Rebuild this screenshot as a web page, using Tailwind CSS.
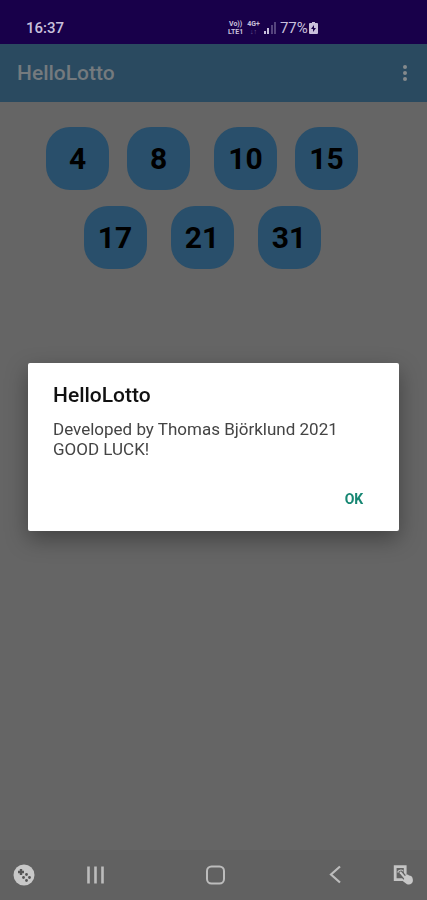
<!DOCTYPE html>
<html lang="en">
<head>
<meta charset="utf-8">
<meta name="viewport" content="width=device-width, initial-scale=1">
<title>HelloLotto</title>
<script src="https://cdn.jsdelivr.net/npm/@tailwindcss/browser@4"></script>
</head>
<body class="bg-[#656565] font-[Roboto,'Noto_Sans',sans-serif]">
<div class="flex min-h-screen flex-col">
  <div class="flex h-11 items-center bg-[#18004a] pt-3 pl-[26px] text-[#c9c0dc]">
    <time class="w-[202px] text-[15px] leading-5 font-medium">16:37</time>
    <div class="flex items-center gap-1">
      <div class="flex flex-col text-center text-[7px] leading-[8px] font-bold"><span>Vo))</span><span>LTE1</span></div>
      <div class="flex flex-col items-center text-[7px] leading-[8px] font-bold"><span>4G+</span><span class="text-[#6c5c94]">↓↑</span></div>
      <svg class="h-3 w-3" viewBox="0 0 12 12" fill="currentColor" aria-hidden="true"><path d="M0 9h2v3H0zM3 6h2v6H3z"/><path opacity=".35" d="M7 3h2v9H7zM10 0h2v12h-2z"/></svg>
      <div class="flex items-center gap-px"><span class="text-[15px] leading-5">77%</span>
      <svg class="h-3 w-[9px]" viewBox="0 0 9 12" fill="currentColor" aria-hidden="true"><path fill-rule="evenodd" d="M3 0h3v1h2q1 0 1 1v9q0 1-1 1H1q-1 0-1-1V2q0-1 1-1h2zM5 3 2 7h2v3l3-4H5z"/></svg></div>
    </div>
  </div>
  <header class="flex h-[58px] items-center justify-between bg-[#2a4a60] pr-3 pl-[17px]">
    <h1 class="text-[21px] leading-6 font-medium text-[#747a7e]">HelloLotto</h1>
    <button type="button" aria-label="More options" class="flex h-10 w-5 items-center justify-center text-[#858a8c]">
      <svg class="h-5 w-5" viewBox="0 0 20 20" fill="currentColor"><circle cx="10" cy="4" r="2"/><circle cx="10" cy="10" r="2"/><circle cx="10" cy="16" r="2"/></svg>
    </button>
  </header>
  <main class="flex flex-1 flex-col gap-4 pt-[25px] pr-[23px] text-3xl font-bold text-black">
    <div class="flex justify-center gap-6">
      <div class="flex gap-[18px]">
        <span class="flex h-[63px] w-[63px] items-center justify-center rounded-3xl bg-[#294f6b]">4</span>
        <span class="flex h-[63px] w-[63px] items-center justify-center rounded-3xl bg-[#294f6b]">8</span>
      </div>
      <div class="flex gap-[18px]">
        <span class="flex h-[63px] w-[63px] items-center justify-center rounded-3xl bg-[#294f6b]">10</span>
        <span class="flex h-[63px] w-[63px] items-center justify-center rounded-3xl bg-[#294f6b]">15</span>
      </div>
    </div>
    <div class="flex justify-center gap-6">
      <span class="flex h-[63px] w-[63px] items-center justify-center rounded-3xl bg-[#294f6b]">17</span>
      <span class="flex h-[63px] w-[63px] items-center justify-center rounded-3xl bg-[#294f6b]">21</span>
      <span class="flex h-[63px] w-[63px] items-center justify-center rounded-3xl bg-[#294f6b]">31</span>
    </div>
  </main>
  <nav class="flex h-[50px] items-center justify-between bg-[#616161] px-3 text-[#bcbcbc]">
    <button type="button" aria-label="Game tools" class="flex h-10 w-6 items-center justify-center">
      <svg class="h-6 w-6" viewBox="0 0 24 24"><circle cx="12" cy="12" r="10.5" fill="#c8c8c8"/><path d="M9 6v6M6 9h6" stroke="#555" stroke-width="2.4"/><g fill="#555"><circle cx="14.5" cy="11.5" r="1.4"/><circle cx="17.5" cy="14.5" r="1.4"/><circle cx="11.5" cy="14.5" r="1.4"/><circle cx="14.5" cy="17.5" r="1.4"/></g></svg>
    </button>
    <div class="flex flex-1 items-center justify-between pr-11 pl-12">
      <button type="button" aria-label="Recent apps" class="flex h-10 w-6 items-center justify-center">
        <svg class="h-6 w-6" viewBox="0 0 24 24" fill="none" stroke="currentColor" stroke-width="2.6"><path d="M4.500 3.500v17M11.500 3.500v17M18.500 3.500v17"/></svg>
      </button>
      <button type="button" aria-label="Home" class="flex h-10 w-6 items-center justify-center">
        <svg class="h-6 w-6" viewBox="0 0 24 24" fill="none" stroke="currentColor" stroke-width="2"><rect x="3" y="3.500" width="17" height="17" rx="4.500"/></svg>
      </button>
      <button type="button" aria-label="Back" class="flex h-10 w-6 items-center justify-center">
        <svg class="h-6 w-6" viewBox="0 0 24 24" fill="none" stroke="currentColor" stroke-width="2.2"><path d="M17 3.500 8 11.500l9 8"/></svg>
      </button>
    </div>
    <button type="button" aria-label="Touch control" class="flex h-10 w-6 items-center justify-center">
      <svg class="h-6 w-6" viewBox="0 0 24 24"><path d="M4.200 3.700h10v13h-10z" fill="#626262" stroke="#c4c4c4" stroke-width="2.800"/><path d="M6.800 9.500a3 3 0 0 1 5.200-1" fill="none" stroke="#c4c4c4" stroke-width="1.600"/><path d="m10 10 4.500 5.500" stroke="#616161" stroke-width="4.500" stroke-linecap="round"/><path d="m9.500 9.500 5 6" stroke="#c8c8c8" stroke-width="2" stroke-linecap="round"/><path d="M13.500 14 15 11.800q2-.6 3 .7 3 0 3.500 2.500 1.200 3.500-1 5.500-2 1.800-4.500.7l-4-3q-.8-1.500 1-1.700z" fill="#c8c8c8"/></svg>
    </button>
  </nav>
</div>
<div class="fixed inset-0 flex items-center justify-center px-7 pb-[6px]">
  <section role="dialog" aria-modal="true" aria-labelledby="title" class="flex w-full flex-col rounded-xs bg-white px-[25px] pt-5 pb-3 shadow-[0_8px_22px_rgba(0,0,0,0.35)]">
    <h2 id="title" class="text-[21px] leading-6 font-medium text-[#111111]">HelloLotto</h2>
    <p class="pt-3 pb-5 text-[17px] leading-5 text-[#444444]">Developed by Thomas Björklund 2021<br>GOOD LUCK!</p>
    <button type="button" class="-mr-3 h-10 w-16 self-end text-sm font-bold text-[#178773]">OK</button>
  </section>
</div>
</body>
</html>
